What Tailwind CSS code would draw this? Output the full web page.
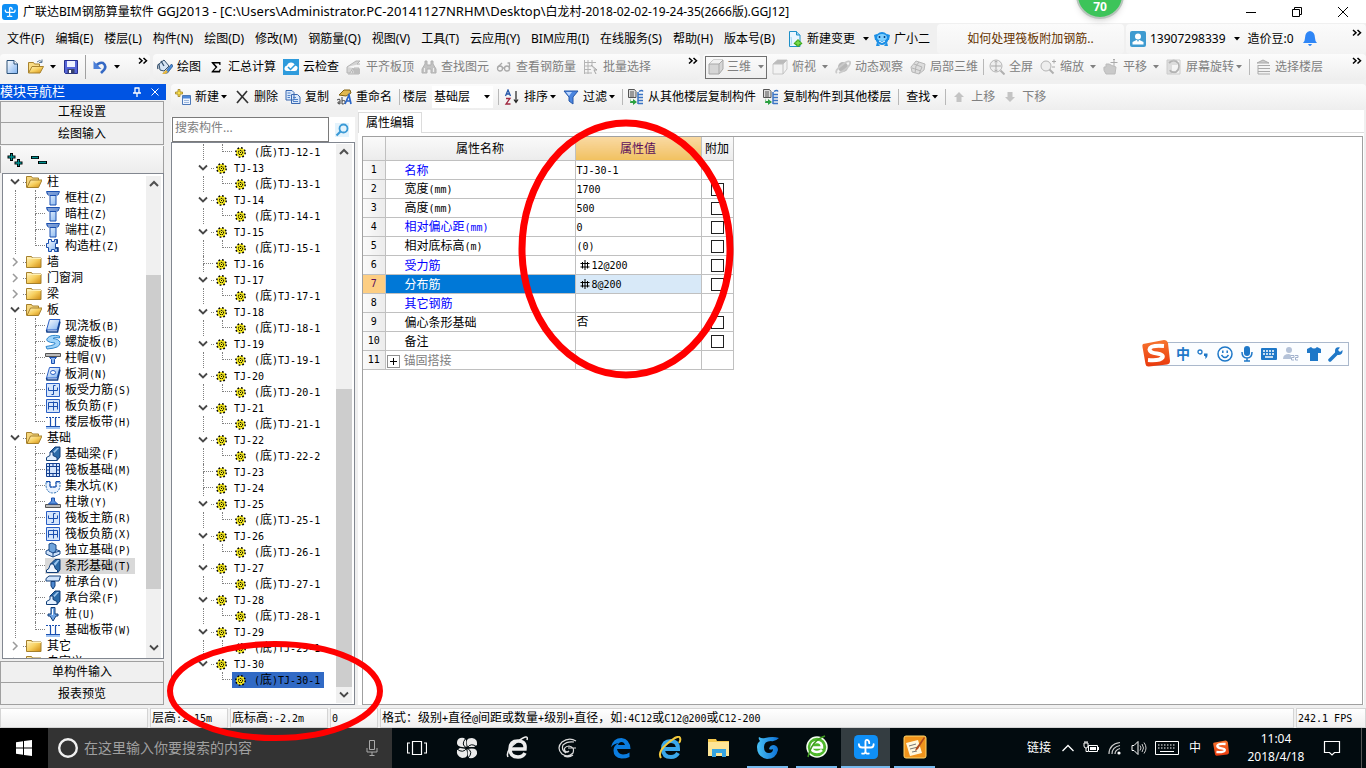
<!DOCTYPE html>
<html lang="zh-CN">
<head>
<meta charset="utf-8">
<title>广联达BIM钢筋算量软件 GGJ2013</title>
<script src="https://cdn.jsdelivr.net/npm/@tailwindcss/browser@4"></script>
</head>
<body class="relative flex h-screen flex-col overflow-hidden bg-[#f0f0f0] font-['Noto_Sans','Noto_Sans_CJK_SC',sans-serif] text-xs text-black">

<svg class="absolute h-0 w-0" aria-hidden="true">
  <defs>
    <linearGradient id="gb" x1="0" y1="0" x2="1" y2="1"><stop offset="0" stop-color="#fff"/><stop offset="1" stop-color="#7fb2f0"/></linearGradient>
    <linearGradient id="gf" x1="0" y1="0" x2="1" y2="1"><stop offset="0" stop-color="#fff3c4"/><stop offset=".5" stop-color="#f7d060"/><stop offset="1" stop-color="#d08a10"/></linearGradient>
    <linearGradient id="go" x1="0" y1="0" x2="0" y2="1"><stop offset="0" stop-color="#f7752f"/><stop offset="1" stop-color="#e9380c"/></linearGradient>
    <linearGradient id="gg" x1="0" y1="0" x2="1" y2="0"><stop offset="0" stop-color="#48c0f4"/><stop offset="1" stop-color="#0b6fd6"/></linearGradient>
  </defs>
  <symbol id="logo" viewBox="0 0 22 22"><rect width="22" height="22" rx="4" fill="#0f8ff5"/><path d="M14 7.500Q14 4.500 11.500 4.500 10.500 4.500 10.500 6v9q0 2.500-3 2M4.500 8.500q0 3 3 3h8q2.500 0 2.500-3M10.500 15q0 2.500 3 2" fill="none" stroke="#fff" stroke-width="1.700" stroke-linecap="round"/></symbol>
  <symbol id="new" viewBox="0 0 16 16"><path d="M3 1.500h7l3.500 3.500v9.500H3z" fill="url(#gb)" stroke="#2a5078"/><path d="M10 1.500V5h3.500" fill="#fff" stroke="#2a5078"/></symbol>
  <symbol id="open" viewBox="0 0 16 16"><path d="M.5 14V3.500h5l1 1.500h5v3" fill="#f9dc85" stroke="#a8822e"/><path d="M.5 14 4 7.500h11.500L12 14z" fill="url(#gf)" stroke="#a8822e"/><path d="M9 3q3-3 5 0m0-2.500V3.500h-3" fill="none" stroke="#5d7b99"/></symbol>
  <symbol id="save" viewBox="0 0 16 16"><path d="M1.500 1.500h13v13h-12l-1-1z" fill="#5565d8" stroke="#27308e"/><path d="M4 2h8v6H4z" fill="#eef2ff"/><path d="M4.500 10h7v4.500h-7z" fill="#39436f"/><path d="M6 11h2v3H6z" fill="#fff"/></symbol>
  <symbol id="undo" viewBox="0 0 16 16"><path d="M4 7q3-4 7-3 4 3 1 7l-3 3" fill="none" stroke="#3569c4" stroke-width="2.600"/><path d="M1.500 2v8h8z" fill="#4c80d8"/></symbol>
  <symbol id="paint" viewBox="0 0 16 16"><path d="m2 5 5-4 5 6-5 5-4-1z" fill="#d8e6f5" stroke="#35516e"/><path d="M2 5q-2 1-1 5M4 2l3 5" fill="none" stroke="#35516e" stroke-width="1.300"/><path d="M14.500 5 9 12l-3 2.500L10.500 14 16 7z" fill="#4a8cd8" stroke="#1f4c88" stroke-width=".7"/><path d="m9 11 2 2-3 2H5z" fill="#e9b83c"/></symbol>
  <symbol id="sigma" viewBox="0 0 16 16"><path d="M3.500 3h9v3h-1l-.7-1.600H6.300L9.500 8l-3.700 3.800h5.200l.8-1.800h1L12 13.500H3.500v-.8L7.500 8.300 3.500 3.800z"/></symbol>
  <symbol id="cloud" viewBox="0 0 16 16"><path d="M0 0h16v16H0z" fill="#2e9bdc"/><path d="M4 12q-3-.5-2.500-3T4 6.500Q5 3.500 8 3.500T12 6.500q3 .5 2.500 3T12 12z" fill="#fff"/><path d="m5 8 2.500 2.500L12 6" fill="none" stroke="#2e9bdc" stroke-width="1.500"/></symbol>
  <symbol id="align" viewBox="0 0 16 16"><path d="m1 8 9-6 4 0-3 3 3 0M1 8v6h3l3-5M6 14l2-5h5v6H2" fill="#d4d4d4" stroke="#b4b4b4"/><path d="M8 10h6v5H8z" fill="#bdbdbd"/></symbol>
  <symbol id="bino" viewBox="0 0 16 16"><path d="M4 2h2v4h4V2h2v3l3 5v4h-5v-4H6v4H1v-4l3-5z" fill="#c3c3c3" stroke="#b0b0b0"/><path d="M3.500 9v4m9-4v4" stroke="#eee"/></symbol>
  <symbol id="glasses" viewBox="0 0 16 16"><g fill="none" stroke="#a9a9a9" stroke-width="1.300"><circle cx="4" cy="9.500" r="2.500"/><circle cx="11" cy="9.500" r="2.500"/><path d="M6.500 9h2M2 8l4-4M13.500 10V4h-2"/></g></symbol>
  <symbol id="batch" viewBox="0 0 16 16"><path d="M1.500 1v14M1.500 3.500H13M1.500 7H9M1.500 10.500H8M1.500 14H9M5 1v14M9 1v6" fill="none" stroke="#b4b4b4"/><path d="m8 6 6 5H11l2 4" fill="#ddd" stroke="#a4a4a4"/></symbol>
  <symbol id="cube" viewBox="0 0 16 16"><path d="M1 5 5.500 1H15v9l-4 5H1z" fill="#d6d6d6" stroke="#a8a8a8"/><path d="M1 5 5.500 1H15l-4 4z" fill="#f2f2f2"/><path d="M1 5h10v10M11 5l4-4" fill="none" stroke="#a8a8a8"/></symbol>
  <symbol id="cube2" viewBox="0 0 16 16"><path d="M1 5 5.500 1H15v9l-4 5H1z" fill="#f2f2f2" stroke="#c8c8c8"/><path d="M1 5 5.500 1H15l-4 4z" fill="#bbb"/><path d="M1 5h10v10M11 5l4-4" fill="none" stroke="#c0c0c0"/></symbol>
  <symbol id="orbit" viewBox="0 0 16 16"><circle cx="8" cy="8" r="5" fill="#b8b8b8"/><path d="M2 14q-3-2 5-8 6-5 8-3 1 2-3 6-3 3-8 5" fill="none" stroke="#cacaca" stroke-width="1.800"/></symbol>
  <symbol id="part" viewBox="0 0 16 16"><path d="m1 8 5-6 9 3-1 6-5 4-7-2z" fill="#ddd" stroke="#b8b8b8"/><path d="m4 5 8 3-3 7M9 3 6 7l-1 7M2 9l9 3" fill="none" stroke="#b4b4b4"/></symbol>
  <symbol id="full" viewBox="0 0 16 16"><circle cx="7" cy="7" r="6" fill="#eee" stroke="#b5b5b5"/><path d="M7 2v10M2 7h10m-6.500-4L7 2l1.500 1M5.500 11 7 12l1.500-1" fill="none" stroke="#aaa"/><path d="m11.500 11.500 4 4" stroke="#b0b0b0" stroke-width="2"/></symbol>
  <symbol id="zoomi" viewBox="0 0 16 16"><circle cx="6" cy="7" r="5" fill="#eee" stroke="#b5b5b5"/><path d="m9.500 10.500 4 4" stroke="#b0b0b0" stroke-width="2"/><path d="M12 2.500h4M14 .5v4M12 8h3" stroke="#aaa"/></symbol>
  <symbol id="pan" viewBox="0 0 16 16"><path d="M3 15q-3-4-2-7h2V5h3l4 2 3 1-1 7z" fill="#c9c9c9" stroke="#bbb"/><path d="M11 0v7M7.500 3.500h7M10 1l1-1 1 1" fill="none" stroke="#aaa"/></symbol>
  <symbol id="rot" viewBox="0 0 16 16"><path d="M1 1h10v5H6v9H1z" fill="#ddd"/><path d="M3 4q5-5 9 0 3 5-2 9-5 1-6-2" fill="none" stroke="#b3b3b3" stroke-width="1.800"/><path d="M1 1h13v14H1z" fill="none" stroke="#ccc"/></symbol>
  <symbol id="floors" viewBox="0 0 16 16"><path d="M2 4 8 1l6 3zM3 6.500h12M3 9.500h12M3 12.500h12M3 15h12M3 6v9" fill="#ccc" stroke="#aaa"/></symbol>
  <symbol id="add" viewBox="0 0 16 16"><path d="M7.500 6.500h8v9h-8z" fill="#eef4ff" stroke="#4c78b8"/><path d="M8 7h7v2.500H8z" fill="#4c86d8"/><path d="M9 11.500h5M9 13.500h5" stroke="#9db8dc"/><path d="M3 .5h2V3h2.500v2H5v2.500H3V5H.5V3H3z" fill="#f8df50" stroke="#a08020" stroke-width=".8"/></symbol>
  <symbol id="del" viewBox="0 0 16 16"><path d="m3 2 11 12M13 2 3 14" stroke="#333" stroke-width="1.700"/></symbol>
  <symbol id="copy" viewBox="0 0 16 16"><path d="M1 1.500h6l2 2V11H1zM6.500 5.500h6l2.500 2.500v6.500H6.500z" fill="#dbe9fb" stroke="#3b69b0"/><path d="M2.500 4h3m-3 2.500h3m-3 2H5M8 8.500h3M8 10.500h5M8 12.500h5" stroke="#4e81c8"/></symbol>
  <symbol id="ren" viewBox="0 0 16 16"><path d="M3 6 8 1h6l1 3-5 3z" fill="#e0b850" stroke="#806010"/><path d="M1 11q3-2 3 0v4m0-2H2q-1 2 2 2M6 8v7q4 0 3-3-1-1-3 0" fill="none" stroke="#444"/><path d="m9 15 4-9 2 9m-4-3h3" fill="none" stroke="#2a66c8" stroke-width="1.700"/></symbol>
  <symbol id="sort" viewBox="0 0 16 16"><path d="M1.500 7 4 1l2.500 6M2.500 5h3" fill="none" stroke="#2456a8" stroke-width="1.300"/><path d="M2 9.500h4L2 15h4.500" fill="none" stroke="#a02840" stroke-width="1.300"/><path d="M12 2v11m-2-2.500 2 3 2-3" fill="none" stroke="#222" stroke-width="1.200"/></symbol>
  <symbol id="filter" viewBox="0 0 16 16"><path d="M1 2h14l-5 6v7l-4-3V8z" fill="#4c86e0" stroke="#2557a8"/><path d="M3 3h6L6 7z" fill="#b9d6ff"/></symbol>
  <symbol id="cpf" viewBox="0 0 16 16"><path d="M.5.500h6l1.500 2v6H.5z" fill="#ddd" stroke="#555"/><path d="M2 3h4M2 5h4M2 7h4" stroke="#555"/><path d="M11 2.500q3-2 4 0M10 5.500h5M10 8.500h5M10 11.500h5M10 14.500h5M10 3v12" fill="none" stroke="#3a74c4" stroke-width="1.500"/><path d="M3 9v3h2v-2l4 3-4 3v-2H2" fill="#2aa040"/></symbol>
  <symbol id="up" viewBox="0 0 16 16"><path d="m8 3 5 5h-2.500v5h-5V8H3z" fill="#c4c4c4"/></symbol>
  <symbol id="down" viewBox="0 0 16 16"><path d="m8 13 5-5h-2.500V3h-5v5H3z" fill="#c4c4c4"/></symbol>
  <symbol id="newchg" viewBox="0 0 16 16"><path d="M2.500.5h7l3.500 3.500v11.500H2.500z" fill="#e8f6ff" stroke="#1e90c8"/><path d="M9.500.5V4H13" fill="#9fd6f5" stroke="#1e90c8"/><path d="M4 6q1 4 0 8" stroke="#9fd6f5" fill="none"/><path d="m11 8 4.500 4.500L11 16l-4.500-3.500z" fill="#3da81c"/><path d="M11 9.500v5M8.500 12h5" stroke="#7fe050" stroke-width="1.400"/></symbol>
  <symbol id="face" viewBox="0 0 16 16"><circle cx="8" cy="7.500" r="6.500" fill="#1b8fe6"/><path d="M0 4l3-1v6H1zM16 4l-3-1v6h2zM3 11l-1 4h4zM13 11l1 4h-4z" fill="#1b8fe6"/><ellipse cx="8" cy="6.500" rx="5" ry="3.500" fill="#7fd0ff"/><path d="M5.500 5v2m5-2v2" stroke="#0a3f80" stroke-width="1.500"/><path d="M5 10q3 3 6 0" fill="none" stroke="#fff"/></symbol>
  <symbol id="avatar" viewBox="0 0 16 16"><rect width="16" height="16" rx="2" fill="#3f9bd0"/><circle cx="8" cy="5.500" r="3" fill="#fff"/><path d="M2.500 13.500V11l4-2h3l4 2v2.500z" fill="#fff"/><path d="m7 9 1 2 1-2" fill="#3f9bd0"/></symbol>
  <symbol id="bell" viewBox="0 0 16 16"><path d="M8 0q5 1 5 7 0 3 2 5H1q2-2 2-5 0-6 5-7zM6 13h4q-2 4-4 0z" fill="#2f86f6"/></symbol>
  <symbol id="dbl" viewBox="0 0 10 8"><path d="m1 1 3 2.800L1 6.500M5.500 1l3 2.800-3 2.700" fill="none" stroke="#000" stroke-width="1.500"/></symbol>
  <symbol id="arr" viewBox="0 0 6 4"><path d="M0 0h6L3 3.500z" fill="currentColor"/></symbol>
  <symbol id="chd" viewBox="0 0 10 8"><path d="m1 1.500 4 4 4-4" fill="none" stroke="#484848" stroke-width="1.800"/></symbol>
  <symbol id="chr" viewBox="0 0 10 10"><path d="m3 1 4 4-4 4" fill="none" stroke="#9a9a9a" stroke-width="1.500"/></symbol>
  <symbol id="chu" viewBox="0 0 10 8"><path d="m1 6 4-4 4 4" fill="none" stroke="#505050" stroke-width="2"/></symbol>
  <symbol id="fold" viewBox="0 0 16 16"><path d="M.5 13.500v-11h5l1 1.500h8.500v9.500z" fill="url(#gf)" stroke="#a5802c"/><path d="M1 4.500h14" stroke="#fff0b0"/></symbol>
  <symbol id="foldo" viewBox="0 0 16 16"><path d="M.5 13.500v-11h5l1 1.500h6V6" fill="#f6d67c" stroke="#a5802c"/><path d="M1 13.500 4.500 6H16l-3.500 7.500z" fill="url(#gf)" stroke="#a5802c"/></symbol>
  <symbol id="gear" viewBox="0 0 11 11"><circle cx="5.500" cy="5.500" r="4.500" fill="#f8ec20"/><circle cx="5.500" cy="5.500" r="4.700" fill="none" stroke="#000" stroke-width="1.500" stroke-dasharray="1.700 1.991"/><circle cx="5.500" cy="5.500" r="2.100" fill="none" stroke="#000" stroke-width="1.100" stroke-dasharray="1 .65"/><path d="M5 5h1v1H5z"/></symbol>
  <symbol id="col" viewBox="0 0 16 16"><path d="M1.500 1.500h13L13 5H3zM5 5.500h6v9.500H5z" fill="url(#gb)" stroke="#1b50b0"/><path d="M1.500 3h12" stroke="#1b50b0"/></symbol>
  <symbol id="gcol" viewBox="0 0 16 16"><path d="M3.500 1.500h3v2h3v-2h3v4h-2v4h2v4h-3v-2h-3v2h-3v-4h-2v-4h2z" fill="url(#gb)" stroke="#1b50b0"/><path d="M12 2v3m-2 5h3v4" fill="none" stroke="#123a80" stroke-width="1.500"/></symbol>
  <symbol id="slab" viewBox="0 0 16 16"><path d="M4.500 1.500H15L12 12H1.500z" fill="url(#gb)" stroke="#2a5fc4"/><path d="m1.500 12 .5 2h10.500L15 3.500" fill="none" stroke="#12408c" stroke-width="1.500"/></symbol>
  <symbol id="spiral" viewBox="0 0 16 16"><path d="M14.500 2Q6 0 2.500 4T10 9q1 2-9 3.500l1 2.500q14-1 13-6.500Q14 5 8 4.500 9 3 14.500 4z" fill="#9fd4fa" stroke="#2f86cc"/></symbol>
  <symbol id="cap" viewBox="0 0 16 16"><path d="M.5 3.500h15v3H.5z" fill="#bbb" stroke="#555"/><path d="M4.500 7.500h7l-2 2v4h-3v-4z" fill="#8fb9f2" stroke="#1b50b0"/></symbol>
  <symbol id="hole" viewBox="0 0 16 16"><path d="M4.500 1.500H15L12 12H1.500z" fill="url(#gb)" stroke="#2a5fc4"/><path d="m1.500 12 .5 2h10.500L15 3.500" fill="none" stroke="#12408c" stroke-width="1.500"/><ellipse cx="8" cy="6.500" rx="2.500" ry="2" fill="#fff" stroke="#2a5fc4"/></symbol>
  <symbol id="bar1" viewBox="0 0 16 16"><path d="M1.500 1.500h13v13h-13z" fill="#d6e6fc" stroke="#2a5fc4"/><path d="M10.500 3.500h-2v9h-2M3.500 5.500v3h9v-3" fill="none" stroke="#1b50b0"/></symbol>
  <symbol id="bar2" viewBox="0 0 16 16"><path d="M1.500 1.500h13v13h-13z" fill="#d6e6fc" stroke="#2a5fc4"/><path d="M8.500 3.500v9M3 8.500h10M3.500 11.500v-7h9v7" fill="none" stroke="#1b50b0"/></symbol>
  <symbol id="strip" viewBox="0 0 16 16"><path d="M1 3.500h14" stroke="#1b50b0" stroke-dasharray="2 1"/><path d="M1 12.500h14M5.500 4v8M10.500 4v8" stroke="#1b50b0" stroke-width="1.200"/><path d="M1 13h14v2H1z" fill="#9fc3f3"/></symbol>
  <symbol id="beam" viewBox="0 0 16 16"><path d="M5 6 10 1h5v10l-3 3.500z" fill="#2b6ba8" stroke="#123f78"/><path d="m8 6 4-4h2L9.500 7z" fill="#9cc6ee"/><path d="M1.500 14.500v-3l3.500-2V6h3v3.500l4 2v3z" fill="#e4f1ff" stroke="#123f78"/></symbol>
  <symbol id="raft" viewBox="0 0 16 16"><path d="M1.500 1.500h13v13h-13zM4.500 4.500h7v7h-7z" fill="#d6e6fc" stroke="#123f90"/><path d="M4.500 1v14M11.500 1v14M1 4.500h14M1 11.500h14M8 1v3M8 12v3M1 8h3M12 8h3" stroke="#123f90"/></symbol>
  <symbol id="pit" viewBox="0 0 16 16"><path d="M1 4h4v5h6V4h4v4q-1 7-7 7T1 8z" fill="#e9f2ff" stroke="#2a6fb4" stroke-dasharray="2 1"/><path d="M1 3.500h4V9h6V3.500h4" fill="none" stroke="#1b50b0"/></symbol>
  <symbol id="pier" viewBox="0 0 16 16"><path d="M.5 10.500h15v3H.5z" fill="#bbb" stroke="#555"/><path d="M3.500 10 6.500 7V4h3v3l3 3z" fill="#5b93dc" stroke="#1b50b0"/></symbol>
  <symbol id="iso" viewBox="0 0 16 16"><path d="m1 9 6-3 8 3v3l-7 3-7-3z" fill="#cfe3fb" stroke="#1b4a88"/><path d="m4 2 3-1 4 2v6l-3 2-4-2z" fill="#6fa4dc" stroke="#1b4a88"/><path d="M8 11v4m0-4 7-2" stroke="#1b4a88"/></symbol>
  <symbol id="stripf" viewBox="0 0 16 16"><path d="M5.500 6 10 1.500h5v10l-2 3z" fill="#2b6ba8" stroke="#123f78"/><path d="m8.500 6 4-4h2L10 8z" fill="#9cc6ee"/><path d="M1.500 14.500V12l2-1 2-5h3l2 5 2 1v2.500z" fill="#eef6ff" stroke="#123f78"/></symbol>
  <symbol id="pcap" viewBox="0 0 16 16"><path d="M1 4.500 4 2h11.500L14 7H1z" fill="#cfe3fb" stroke="#123f78"/><path d="M6 7.500h4V12l-2 3-2-3z" fill="#4d88d0" stroke="#123f78"/></symbol>
  <symbol id="pile" viewBox="0 0 16 16"><path d="M6 1.500h4V8h3v2h-2l-3 5-3-5H3V8h3z" fill="#6fa4e4" stroke="#123f78"/><path d="M7.500 3v6" stroke="#fff"/></symbol>
  <symbol id="sogou" viewBox="0 0 28 28"><path d="M1 5 22 1q3 0 4 3l2 18q0 3-3 3.500L7 27.500Q4 28 3.500 25L.5 8Q0 6 1 5z" fill="url(#go)"/><path d="M22 7Q8 6 7.500 10.500 8 14 15 14.500q7 1 5.500 4Q18 22 6 21" fill="none" stroke="#fff" stroke-width="4"/></symbol>
</svg>

<!-- title bar -->
<header class="flex h-[23px] shrink-0 items-center bg-white pl-0.5">
  <svg class="mr-[5px] size-4"><use href="#logo"/></svg>
  <h1 class="flex-1 whitespace-nowrap">广联达BIM钢筋算量软件 <span class="text-[13px]">GGJ2013 - [C:\Users\Administrator.PC-20141127NRHM\Desktop\</span>白龙村-2018-02-02-19-24-35(2666版).GGJ12]</h1>
  <div class="flex">
    <button aria-label="最小化" class="flex w-[46px] justify-center"><svg class="size-3" viewBox="0 0 12 12"><path d="M1 6.500h10" stroke="#000"/></svg></button>
    <button aria-label="还原" class="flex w-[46px] justify-center"><svg class="size-3" viewBox="0 0 12 12"><path d="M1.500 3.500h7v7h-7zM3.500 3.500v-2h7v7h-2" fill="none" stroke="#000"/></svg></button>
    <button aria-label="关闭" class="flex w-[46px] justify-center"><svg class="size-3" viewBox="0 0 12 12"><path d="m1 1 10 10M11 1 1 11" stroke="#000"/></svg></button>
  </div>
</header>

<!-- menu bar -->
<nav class="flex h-[31px] shrink-0 items-stretch whitespace-nowrap">
  <div class="flex items-center gap-[11px] pl-[7px]">
    <button>文件(F)</button><button>编辑(E)</button><button>楼层(L)</button><button>构件(N)</button><button>绘图(D)</button><button>修改(M)</button><button>钢筋量(Q)</button><button>视图(V)</button><button>工具(T)</button><button>云应用(Y)</button><button>BIM应用(I)</button><button>在线服务(S)</button><button>帮助(H)</button><button>版本号(B)</button>
  </div>
  <div class="ml-auto flex w-[150px] shrink-0 items-center">
    <button class="flex items-center gap-1"><svg class="size-4"><use href="#newchg"/></svg>新建变更<svg class="ml-1 h-1 w-1.5"><use href="#arr"/></svg></button>
    <button class="ml-[5px] flex items-center gap-1"><svg class="size-4"><use href="#face"/></svg>广小二</button>
  </div>
  <div class="mt-px mr-0.5 flex w-[187px] shrink-0 items-center justify-center rounded-sm bg-gradient-to-b from-[#fbfbfb] to-[#f3f3f3]"><a href="#" class="text-[#663300]">如何处理筏板附加钢筋..</a></div>
  <div class="mt-px flex w-[240px] shrink-0 items-center rounded-sm bg-gradient-to-b from-[#fbfbfb] to-[#f3f3f3] pl-1">
    <button class="flex items-center gap-1"><svg class="size-4"><use href="#avatar"/></svg>13907298339<svg class="ml-1 h-1 w-1.5"><use href="#arr"/></svg></button>
    <span class="ml-2">造价豆:0</span>
    <button aria-label="通知" class="ml-2"><svg class="size-4"><use href="#bell"/></svg></button>
    <button aria-label="更多" class="mr-1 mb-3 ml-auto"><svg class="h-2 w-2.5"><use href="#dbl"/></svg></button>
  </div>
</nav>

<!-- main toolbars -->
<div class="flex h-[26px] shrink-0 gap-[3px] whitespace-nowrap">
  <div class="flex w-[150px] shrink-0 items-center rounded-sm bg-gradient-to-b from-[#fcfcfc] to-[#eeeeee] pl-1">
    <button aria-label="新建"><svg class="size-4"><use href="#new"/></svg></button>
    <button aria-label="打开" class="ml-2 flex items-center gap-1.5"><svg class="size-4"><use href="#open"/></svg><svg class="h-1 w-1.5"><use href="#arr"/></svg></button>
    <button aria-label="保存" class="ml-[7px]"><svg class="size-4"><use href="#save"/></svg></button>
    <span class="ml-1.5 h-6 w-px bg-[#a0a0a0]"></span>
    <button aria-label="撤销" class="ml-1.5 flex items-center gap-1.5"><svg class="size-4"><use href="#undo"/></svg><svg class="h-1 w-1.5"><use href="#arr"/></svg></button>
    <button aria-label="更多" class="mr-0.5 mb-3 ml-auto"><svg class="h-2 w-2.5"><use href="#dbl"/></svg></button>
  </div>
  <div class="flex w-[547px] shrink-0 items-center gap-[7px] rounded-sm bg-gradient-to-b from-[#fcfcfc] to-[#eeeeee] pl-1">
    <button class="flex items-center gap-1"><svg class="size-4"><use href="#paint"/></svg>绘图</button>
    <button class="flex items-center gap-1"><svg class="size-4"><use href="#sigma"/></svg>汇总计算</button>
    <button class="flex items-center gap-1"><svg class="size-4"><use href="#cloud"/></svg>云检查</button>
    <button class="flex items-center gap-1 text-[#808080]"><svg class="size-4"><use href="#align"/></svg>平齐板顶</button>
    <button class="flex items-center gap-1 text-[#808080]"><svg class="size-4"><use href="#bino"/></svg>查找图元</button>
    <button class="flex items-center gap-1 text-[#808080]"><svg class="size-4"><use href="#glasses"/></svg>查看钢筋量</button>
    <button class="flex items-center gap-1 text-[#808080]"><svg class="size-4"><use href="#batch"/></svg>批量选择</button>
    <button aria-label="更多" class="mr-0.5 mb-3 ml-auto"><svg class="h-2 w-2.5"><use href="#dbl"/></svg></button>
  </div>
  <div class="flex min-w-0 flex-1 items-center gap-[7px] rounded-sm bg-gradient-to-b from-[#fcfcfc] to-[#eeeeee] pl-0.5 text-[#808080]">
    <button class="-mr-0.5 flex h-[23px] w-[62px] items-center gap-[3px] border border-[#707070] pl-0.5"><svg class="size-4"><use href="#cube"/></svg>三维<svg class="ml-1 h-1 w-1.5"><use href="#arr"/></svg></button>
    <button class="flex items-center gap-1"><svg class="size-4"><use href="#cube2"/></svg>俯视<svg class="ml-0.5 h-1 w-1.5"><use href="#arr"/></svg></button>
    <button class="flex items-center gap-1"><svg class="size-4"><use href="#orbit"/></svg>动态观察</button>
    <button class="flex items-center gap-1"><svg class="size-4"><use href="#part"/></svg>局部三维</button>
    <span class="-mx-0.5 h-4 w-px bg-[#b8b8b8]"></span>
    <button class="flex items-center gap-1"><svg class="size-4"><use href="#full"/></svg>全屏</button>
    <button class="flex items-center gap-1"><svg class="size-4"><use href="#zoomi"/></svg>缩放<svg class="ml-0.5 h-1 w-1.5"><use href="#arr"/></svg></button>
    <button class="flex items-center gap-1"><svg class="size-4"><use href="#pan"/></svg>平移<svg class="ml-0.5 h-1 w-1.5"><use href="#arr"/></svg></button>
    <button class="flex items-center gap-1"><svg class="size-4"><use href="#rot"/></svg>屏幕旋转<svg class="-ml-0.5 h-1 w-1.5"><use href="#arr"/></svg></button>
    <span class="h-4 w-px bg-[#b8b8b8]"></span>
    <button class="-ml-0.5 flex items-center gap-1"><svg class="size-4"><use href="#floors"/></svg>选择楼层</button>
    <button aria-label="更多" class="mr-1 mb-3 ml-auto"><svg class="h-2 w-2.5"><use href="#dbl"/></svg></button>
  </div>
</div>

<div class="mt-1 flex min-h-0 flex-1">
  <!-- module navigation -->
  <aside class="flex w-[166px] shrink-0 flex-col font-['DejaVu_Sans_Mono','Noto_Sans_CJK_SC',monospace]">
    <div class="flex h-4 shrink-0 items-center bg-[#0054e3] text-white">
      <h2 class="flex-1 text-[13px] leading-4">模块导航栏</h2>
      <button aria-label="固定" class="mr-2"><svg class="size-2.5" viewBox="0 0 10 10"><path d="M3 1v4.500M7 1v4.500M2.500 1h5M1 6h8M5 6v4" fill="none" stroke="#fff" stroke-width="1.300"/></svg></button>
      <button aria-label="关闭" class="mr-1.5"><svg class="size-2.5" viewBox="0 0 10 10"><path d="m1.500 1.500 7 7M8.500 1.500l-7 7" stroke="#fff"/></svg></button>
    </div>
    <button class="mt-px mr-0.5 h-[22px] shrink-0 border border-[#a0a0a0] bg-[#f0f0f0]">工程设置</button>
    <button class="mr-0.5 h-[22px] shrink-0 border border-t-0 border-[#a0a0a0] bg-[#f0f0f0]">绘图输入</button>
    <div class="mt-px mr-0.5 flex h-[27px] shrink-0 items-center gap-2 border-x border-[#a0a0a0] bg-gradient-to-b from-[#fafafa] to-[#ececec] pl-1.5">
      <button aria-label="全部展开"><svg class="size-4" viewBox="0 0 16 16"><path d="M4.500 1v8M.5 5h8M11.500 7v8M7.500 11h8" stroke="#000" stroke-width="3"/><path d="M4.500 2v6M1.500 5h6M11.500 8v6M8.500 11h6" stroke="#009090" stroke-width="1.300"/></svg></button>
      <button aria-label="全部折叠"><svg class="size-4" viewBox="0 0 16 16"><path d="M0 5.500h8M7 10.500h9" stroke="#000" stroke-width="3"/><path d="M1 5.500h6M8 10.500h7" stroke="#009090" stroke-width="1.300"/></svg></button>
    </div>
    <div class="mr-0.5 ml-0.5 flex min-h-0 flex-1 border border-[#828790] bg-white">
      <ul id="nav" class="min-w-0 flex-1 overflow-hidden"></ul>
      <div class="mt-0.5 mr-0.5 flex w-[15px] shrink-0 flex-col items-center bg-[#f0f0f0]">
        <svg class="mt-1 h-2 w-2.5 shrink-0"><use href="#chu"/></svg>
        <div class="mt-[87px] h-[314px] w-full bg-[#cdcdcd]"></div>
        <svg class="mt-auto mb-1.5 h-2 w-2.5 shrink-0"><use href="#chd"/></svg>
      </div>
    </div>
    <button class="mt-0.5 mr-0.5 h-[22px] shrink-0 border border-[#a0a0a0] bg-[#f0f0f0]">单构件输入</button>
    <button class="mr-0.5 mb-[3px] h-[22px] shrink-0 border border-t-0 border-[#a0a0a0] bg-[#f0f0f0]">报表预览</button>
  </aside>

  <div class="ml-[5px] flex min-w-0 flex-1 flex-col">
    <!-- component toolbar -->
    <div class="flex h-[26px] shrink-0 items-center gap-[7px] rounded-sm bg-gradient-to-b from-[#fcfcfc] to-[#eeeeee] pl-1 whitespace-nowrap">
      <button class="flex items-center gap-1"><svg class="size-4"><use href="#add"/></svg>新建<svg class="-ml-0.5 h-1 w-1.5"><use href="#arr"/></svg></button>
      <button class="flex items-center gap-1"><svg class="size-4"><use href="#del"/></svg>删除</button>
      <button class="flex items-center gap-1"><svg class="size-4"><use href="#copy"/></svg>复制</button>
      <button class="flex items-center gap-1"><svg class="size-4"><use href="#ren"/></svg>重命名</button>
      <span class="h-4 w-px bg-[#b8b8b8]"></span>
      <label for="floor" class="-ml-1">楼层</label>
      <div class="-ml-0.5 flex h-[22px] w-[61px] items-center bg-white">
        <select id="floor" class="w-[51px] appearance-none bg-white pl-0.5"><option>基础层</option></select><svg class="pointer-events-none ml-px h-1 w-1.5"><use href="#arr"/></svg>
      </div>
      <span class="-ml-0.5 h-4 w-px bg-[#b8b8b8]"></span>
      <button class="-ml-0.5 flex items-center gap-1"><svg class="size-4"><use href="#sort"/></svg>排序<svg class="-ml-0.5 h-1 w-1.5"><use href="#arr"/></svg></button>
      <button class="flex items-center gap-1"><svg class="size-4"><use href="#filter"/></svg>过滤<svg class="-ml-0.5 h-1 w-1.5"><use href="#arr"/></svg></button>
      <span class="h-4 w-px bg-[#b8b8b8]"></span>
      <button class="-ml-0.5 flex items-center gap-1"><svg class="size-4"><use href="#cpf"/></svg>从其他楼层复制构件</button>
      <button class="flex items-center gap-1"><svg class="size-4"><use href="#cpf"/></svg>复制构件到其他楼层</button>
      <span class="h-4 w-px bg-[#b8b8b8]"></span>
      <button class="flex items-center gap-1">查找<svg class="-ml-0.5 h-1 w-1.5"><use href="#arr"/></svg></button>
      <span class="h-4 w-px bg-[#b8b8b8]"></span>
      <button class="-ml-0.5 flex items-center gap-1 text-[#808080]"><svg class="size-4"><use href="#up"/></svg>上移</button>
      <button class="flex items-center gap-1 text-[#808080]"><svg class="size-4"><use href="#down"/></svg>下移</button>
    </div>

    <div class="mb-[3px] flex min-h-0 flex-1">
      <!-- component tree -->
      <section class="flex w-[184px] shrink-0 flex-col font-['DejaVu_Sans_Mono','Noto_Sans_CJK_SC',monospace]">
        <div class="mt-[7px] flex h-[25px] shrink-0 bg-white pl-px">
          <input type="search" aria-label="搜索构件" placeholder="搜索构件..." class="w-[157px] appearance-none border border-[#7a7a7a] bg-white pb-1 pl-0.5 font-['Noto_Sans','Noto_Sans_CJK_SC',sans-serif] placeholder:text-[#808080]">
          <button aria-label="搜索" class="flex flex-1 items-center justify-center"><svg class="size-3.5" viewBox="0 0 14 14"><path d="M0 0h14v14H0z" fill="#e4f3fc"/><circle cx="8.500" cy="5.500" r="4" fill="none" stroke="#3b9ad6" stroke-width="1.800"/><path d="m5.500 8.500-4 4" stroke="#3b9ad6" stroke-width="2.200"/></svg></button>
        </div>
        <div class="flex min-h-0 flex-1 border border-[#828790] bg-white">
          <ul id="tree" class="min-w-0 flex-1 overflow-hidden pt-px"></ul>
          <div class="mt-px mr-0.5 mb-px flex w-4 shrink-0 flex-col items-center bg-[#f0f0f0]">
            <svg class="mt-1 h-2 w-2.5 shrink-0"><use href="#chu"/></svg>
            <div class="mt-auto h-[298px] w-full bg-[#cdcdcd]"></div>
            <svg class="my-1 h-2 w-2.5 shrink-0"><use href="#chd"/></svg>
          </div>
        </div>
      </section>

      <!-- property editor -->
      <main class="mr-0.5 ml-[3px] flex min-w-0 flex-1 flex-col bg-white pt-0.5 font-['DejaVu_Sans_Mono','Noto_Sans_CJK_SC',monospace]">
        <div class="flex h-[21px] shrink-0">
          <button class="w-16 border border-b-0 border-[#dcdcdc]">属性编辑</button>
          <div class="flex-1 border-b border-[#dcdcdc]"></div>
        </div>
        <div class="mt-[3px] mr-px ml-1 min-h-0 flex-1 border border-[#a0a0a0]">
          <table class="w-[370px] table-fixed border-collapse text-left font-normal">
            <colgroup><col class="w-[22px]"><col class="w-[190px]"><col class="w-[126px]"><col class="w-[32px]"></colgroup>
            <thead>
              <tr class="h-[23px] bg-gradient-to-b from-[#fafafa] to-[#ececec] text-center">
                <th class="border border-t-0 border-l-0 border-[#c0c0c0]"></th>
                <th class="border border-t-0 border-[#c0c0c0] pt-0.5 font-normal">属性名称</th>
                <th class="border border-t-0 border-[#c0c0c0] bg-gradient-to-b from-[#f9d9a2] to-[#f1c15f] pt-0.5 font-normal text-[#5b0f5b]">属性值</th>
                <th class="border border-t-0 border-[#c0c0c0] pt-0.5 font-normal whitespace-nowrap">附加</th>
              </tr>
            </thead>
            <tbody id="props"></tbody>
          </table>
        </div>
      </main>
    </div>
  </div>
</div>

<!-- status bar -->
<footer class="flex h-5 shrink-0 gap-0.5 font-['DejaVu_Sans_Mono','Noto_Sans_CJK_SC',monospace] leading-[18px] whitespace-nowrap">
  <div class="w-[148px] border border-[#d4d4d4] bg-gradient-to-b from-white to-[#f0f0f0]"></div>
  <div data-mix class="w-[78px] border border-[#d4d4d4] bg-gradient-to-b from-white to-[#f0f0f0] pl-px">层高:2.15m</div>
  <div data-mix class="w-[98px] border border-[#d4d4d4] bg-gradient-to-b from-white to-[#f0f0f0] pl-px">底标高:-2.2m</div>
  <div data-mix class="w-12 border border-[#d4d4d4] bg-gradient-to-b from-white to-[#f0f0f0] pl-px">0</div>
  <div data-mix class="flex-1 border border-[#d4d4d4] bg-gradient-to-b from-white to-[#f0f0f0] pl-px">格式：级别+直径@间距或数量+级别+直径，如:4C12或C12@200或C12-200</div>
  <div data-mix class="w-[70px] border border-[#d4d4d4] bg-gradient-to-b from-white to-[#f0f0f0] pl-px">242.1 FPS</div>
</footer>

<!-- taskbar -->
<div class="flex h-10 shrink-0 items-stretch bg-[#020b0f] text-white">
  <button aria-label="开始" class="flex w-12 items-center justify-center bg-black"><svg class="size-4" viewBox="0 0 16 16"><path d="M0 2.300 7 1.200v6.300H0zM8 1l8-1v7.500H8zM0 8.500h7v6.300L0 13.700zM8 8.500h8V16l-8-1.100z" fill="#fff"/></svg></button>
  <div class="flex w-[344px] items-center bg-[#333333] pl-2.5">
    <svg class="size-5" viewBox="0 0 20 20"><circle cx="10" cy="10" r="8.800" fill="none" stroke="#f0f0f0" stroke-width="2.400"/></svg>
    <input type="text" aria-label="搜索" placeholder="在这里输入你要搜索的内容" class="ml-1.5 flex-1 bg-transparent text-sm placeholder:text-[#a0a0a0]">
    <button aria-label="语音" class="mr-3"><svg class="size-4" viewBox="0 0 16 16"><path d="M5.500.5h5v9h-5zM3 8v4h10V8M8 12v3.500M5.500 15.500h5" fill="none" stroke="#aaa"/></svg></button>
  </div>
  <button aria-label="任务视图" class="flex w-[50px] items-center justify-center"><svg class="h-4 w-5" viewBox="0 0 20 16"><path d="M5.500 1.500h9v13h-9zM3 3H.5v10H3M17 3h2.500v10H17" fill="none" stroke="#fff" stroke-width="1.200"/></svg></button>
  <button aria-label="风扇" class="flex w-[50px] items-center justify-center"><svg class="size-6" viewBox="0 0 24 24"><g fill="#ebebeb"><path d="M11.500 11Q1 12 2 6q1-5 7-4l2 2z"/><path d="M13 11Q9 2 17 2q6 1 5 7l-3 2z"/><path d="M12.500 13Q23 11 22 18q-2 5-8 4l-1-2z"/><path d="M11 13Q15 22 7 22q-6-2-5-8l3-2z"/></g><path d="M12 12Q5 9 11 2M12 12Q16 6 22 11M12 12q7 4 1 10M12 12q-4 6-10 1" fill="none" stroke="#020b0f"/></svg></button>
  <button aria-label="浏览器" class="flex w-[50px] items-center justify-center"><svg class="size-6" viewBox="0 0 24 24"><path d="M6 13h14q1-8-7-8-8 0-8 8t8 8q5 0 7-4" fill="none" stroke="#eee" stroke-width="3.500"/><path d="M3 21Q0 15 12 6T22 4" fill="none" stroke="#eee" stroke-width="1.500"/></svg></button>
  <button aria-label="广联达G" class="flex w-[50px] items-center justify-center"><svg class="size-5" viewBox="0 0 20 20"><path d="M19 3Q12-1 5 4-1 10 5 16q6 4 11-1 2-6-4-7-6 1-4 5 2 2 4 0M17 4q-7-1-11 3-2 5 3 8M11 10h8M16 17q-4 3-9 1" fill="none" stroke="#ddd" stroke-width="1.200"/></svg></button>
  <button aria-label="Edge" class="ml-1 flex w-[49px] items-center justify-center"><svg class="size-[22px]" viewBox="0 0 22 22"><path d="M1 10Q3 1 11.500 1 20 2 20.500 12H7q1 5 6 5.500 4 0 6.500-2V20q-3 1.500-8 1.500-8-1-8-8Q3.500 8 9 6q-5 .5-8 4zm7-2h7q-1-3-3.500-3T8 8z" fill="#0b7de0"/></svg></button>
  <button aria-label="Internet Explorer" class="flex w-[49px] items-center justify-center"><svg class="size-6" viewBox="0 0 24 24"><path d="M6 13h14q0-8-7-8-8 0-8 8t8 8q5 0 7-4" fill="none" stroke="#3aa7ea" stroke-width="4"/><path d="M3 22Q-1 16 10 7T22 2q1 2-1 5" fill="none" stroke="#f3c93c" stroke-width="2"/></svg></button>
  <button aria-label="文件资源管理器" class="flex w-[49px] items-center justify-center"><svg class="h-5 w-[22px]" viewBox="0 0 22 20"><path d="M0 1h8l1 2h12v15H0z" fill="#f5c84c"/><path d="M0 4h21v14H0z" fill="#fde596"/><path d="M4 19v-8h14v8h-4v-4H8v4z" fill="#36a4e0"/></svg></button>
  <button aria-label="广联达" class="mx-1 flex w-[41px] items-center justify-center border-b-2 border-[#76b9ed]"><svg class="size-6" viewBox="0 0 24 24"><path d="M23 3Q19 7 15 6 8 6 8 12q0 6 5 6 4 0 4-4-2 1-4 0 1-4 5-4 4 1 4 5-2 9-11 9Q1 22 1 12 1 8 4 6 2 4 3 2q3 2 6 1 8-2 14 0z" fill="url(#gg)"/></svg></button>
  <button aria-label="360浏览器" class="mx-1 flex w-[41px] items-center justify-center border-b-2 border-[#76b9ed]"><svg class="size-6" viewBox="0 0 24 24"><circle cx="12" cy="12" r="10" fill="#4fb82c" stroke="#f4fff0" stroke-width="1.500"/><path d="M6.500 12.500H17q0-5.500-5-5.500t-5.500 5q0 5 5.500 5 3 0 5-2" fill="none" stroke="#fff" stroke-width="2.500"/><path d="M3 22Q7 5 20 1" fill="none" stroke="#3f9a20" stroke-width="1.500"/></svg></button>
  <button aria-label="钢筋算量" class="flex w-[49px] items-center justify-center border-b-2 border-[#76b9ed] bg-[#343d41]"><svg class="size-6"><use href="#logo"/></svg></button>
  <button aria-label="便笺" class="mx-1 flex w-[41px] items-center justify-center border-b-2 border-[#76b9ed]"><svg class="size-6" viewBox="0 0 24 24"><rect x="1" y="1" width="22" height="22" rx="2" fill="#f0941c" stroke="#ffd66a"/><path d="m3 8 12-3 4 13-12 3z" fill="#fff7dc"/><path d="m6 11 7-2M7 14l8-2M9 17l5-1" stroke="#777"/><path d="m21 2-8 11-1 3 3-2 7-11z" fill="#b04a1c"/></svg></button>
  <div class="ml-auto flex items-center">
    <span>链接</span>
    <button aria-label="显示隐藏的图标" class="ml-2.5"><svg class="h-3 w-3.5" viewBox="0 0 14 12"><path d="m1.500 9 5.500-5.500L12.500 9" fill="none" stroke="#fff" stroke-width="1.300"/></svg></button>
    <svg class="ml-2 size-4" viewBox="0 0 16 16"><path d="M5.500 5.500h9v6h-9zM15.500 7v3M1 3v3q0 2 2 2t2-2V3zM2 3V1M4 3V1M3 8v3.500h2" fill="none" stroke="#fff"/><path d="M7 7h6v3H7z" fill="#fff"/></svg>
    <svg class="ml-2 size-4" viewBox="0 0 16 16"><path d="M2 14Q2 4 13 2.500M5 14q0-7 8-8.500M8 14q0-4 5-5.500" fill="none" stroke="#ccc" stroke-width="1.200"/><circle cx="12" cy="13" r="1.600" fill="#fff"/></svg>
    <svg class="ml-2 size-4" viewBox="0 0 16 16"><path d="M1 5.500h2l4-4v13l-4-4H1z" fill="none" stroke="#fff"/><path d="M9 5.500q2 2.500 0 5M11 4q3 4 0 8M13 2.500q4 5.500 0 11" fill="none" stroke="#ccc"/></svg>
    <svg class="ml-2 h-3.5 w-6" viewBox="0 0 24 14"><path d="M.5.500h23v13H.5z" fill="none" stroke="#fff"/><path d="M3 4h18M3 7h18" stroke="#fff" stroke-dasharray="1.500 1.500"/><path d="M5 10.500h14" stroke="#fff"/></svg>
    <span class="ml-2.5">中</span>
    <svg class="ml-3 size-4"><use href="#sogou"/></svg>
    <div class="ml-4 w-[62px] text-center leading-[18px]"><div>11:04</div><div>2018/4/18</div></div>
    <button aria-label="操作中心" class="ml-4"><svg class="size-[18px]" viewBox="0 0 18 18"><path d="M1.500 2.500h15v11h-5L9 16l-2.500-2.500h-5z" fill="none" stroke="#fff" stroke-width="1.200"/></svg></button>
    <span class="ml-5 h-10 w-px bg-[#555555]"></span>
    <span class="w-1"></span>
  </div>
</div>

<!-- floating input method bar -->
<div class="absolute top-[342px] right-[17px] flex h-6 w-[196px] items-center justify-between border border-[#aab8cc] bg-[#fbfdff] pr-1 pl-[22px] text-[#1f78c8]">
  <svg class="absolute -top-1 -left-3 size-7"><use href="#sogou"/></svg>
  <button aria-label="中文" class="text-sm font-bold">中</button>
  <svg class="size-3.5" viewBox="0 0 14 14"><circle cx="4" cy="5" r="2" fill="none" stroke="#1f78c8" stroke-width="1.300"/><path d="M8 6.500h3.500q.5 4-2.500 5.500 1-2 0-3H8z" fill="#1f78c8"/></svg>
  <svg class="size-4" viewBox="0 0 16 16"><g fill="none" stroke="#1f78c8" stroke-width="1.500"><circle cx="8" cy="8" r="7"/><path d="M4.500 9q3.500 5 7 0M5.800 4.500v2.500M10.200 4.500v2.500"/></g></svg>
  <svg class="size-4" viewBox="0 0 16 16"><rect x="5" y="0" width="6" height="10" rx="3" fill="#1f78c8"/><path d="M3 6q0 6 5 6t5-6M8 12v3M5 15h6" fill="none" stroke="#1f78c8" stroke-width="1.500"/></svg>
  <svg class="size-4" viewBox="0 0 16 16"><rect y="2" width="16" height="12" rx="1" fill="#1f78c8"/><path d="M2 5h12M2 8h12" stroke="#fff" stroke-width="1.500" stroke-dasharray="2 1"/><path d="M4 11h8" stroke="#fff" stroke-width="1.500"/></svg>
  <svg class="size-4" viewBox="0 0 16 16"><circle cx="6" cy="4" r="3" fill="#b4c2d8"/><path d="M0 13q0-5 6-5l2 1v4z" fill="#b4c2d8"/><path d="M8 9.500h3v2H8.500v2.500H11M12 9.500h3v2h-2.500v2.500H15" fill="none" stroke="#a0b0cc"/></svg>
  <svg class="size-4" viewBox="0 0 16 16"><path d="M5 1q3 3 6 0l4 2 0 4h-3v8H4V7H1V3z" fill="#1f78c8"/></svg>
  <svg class="size-4" viewBox="0 0 16 16"><path d="m2 14 7-7" stroke="#1f78c8" stroke-width="3.500" stroke-linecap="round"/><path d="M14.500 4 12 6 10 4l2-2.500Q7 .5 7 5t4 4 3.500-5z" fill="#1f78c8"/></svg>
</div>

<!-- floating speed ball -->
<div class="absolute -top-[29px] left-[1076px] flex size-12 items-end justify-center rounded-full border-2 border-[#b8c4bc] bg-[#3cc45a] pb-0.5 text-xs font-bold text-white shadow-md">70</div>

<!-- red annotation rings -->
<svg class="pointer-events-none absolute inset-0 h-full w-full" fill="none" stroke="#ff0000"><ellipse cx="626" cy="249" rx="104" ry="126" stroke-width="7"/><ellipse cx="275" cy="691" rx="105" ry="47" stroke-width="6"/></svg>

<script>
// Latin runs are set smaller so that two of them take the width of one Chinese character.
const mix = s => s.replace(/[\x20-\x7e]+/g, m => `<span class="text-[10px]">${m}</span>`);
const use = (id, cls) => `<svg class="${cls}"><use href="#${id}"/></svg>`;
const elbow = last => `<span class="flex h-4 w-2.5 flex-col"><span class="h-2 border-b border-l border-dotted border-[#808080]"></span><span class="${last ? 'h-2' : 'h-2 border-l border-dotted border-[#808080]'}"></span></span>`;

const modules = [
  ['柱', [['col','框柱(Z)'],['col','暗柱(Z)'],['col','端柱(Z)'],['gcol','构造柱(Z)']]],
  ['墙'], ['门窗洞'], ['梁'],
  ['板', [['slab','现浇板(B)'],['spiral','螺旋板(B)'],['cap','柱帽(V)'],['hole','板洞(N)'],['bar1','板受力筋(S)'],['bar2','板负筋(F)'],['strip','楼层板带(H)']]],
  ['基础', [['beam','基础梁(F)'],['raft','筏板基础(M)'],['pit','集水坑(K)'],['pier','柱墩(Y)'],['bar1','筏板主筋(R)'],['bar2','筏板负筋(X)'],['iso','独立基础(P)'],['stripf','条形基础(T)'],['pcap','桩承台(V)'],['beam','承台梁(F)'],['pile','桩(U)'],['strip','基础板带(W)']]],
  ['其它'], ['自定义']
];
document.getElementById('nav').innerHTML = modules.map(([name, kids]) =>
  `<li class="flex h-4 items-center pl-[7px] leading-4 whitespace-nowrap">${kids ? use('chd','h-2 w-2.5') : use('chr','size-2.5')}<span class="ml-[3px] w-[3px] border-b border-dotted border-[#808080]"></span>${use(kids ? 'foldo' : 'fold','size-4')}<span class="ml-[5px]">${name}</span></li>` +
  (kids || []).map(([icon, label], i) =>
    `<li class="flex h-4 items-center pl-3 leading-4 whitespace-nowrap"><span class="h-4 w-5 border-l border-dotted border-[#808080]"></span>${elbow(i === kids.length - 1)}<span class="${label === '条形基础(T)' ? 'flex h-4 items-center bg-[#d9d9d9] pr-1' : 'flex h-4 items-center'}">${use(icon,'size-4')}<span class="ml-1">${mix(label)}</span></span></li>`).join('')
).join('');

const kid = (label, last) => `<li class="flex h-4 items-center pl-[31px] leading-4 whitespace-nowrap"><span class="${last ? 'h-4 w-[19px]' : 'h-4 w-[19px] border-l border-dotted border-[#808080]'}"></span>${elbow(true)}<span class="${last ? 'flex h-4 items-center bg-[#316ac5] pr-1 pl-[3px]' : 'flex h-4 items-center pl-[3px]'}">${use('gear','size-[11px]')}<span class="ml-2">${mix(label)}</span></span></li>`;
let rows = kid('(底)TJ-12-1', false);
for (let n = 13; n <= 30; n++) {
  const leaf = n === 16 || n === 23 || n === 24;
  rows += leaf
    ? `<li class="flex h-4 items-center pl-[31px] leading-4">${elbow(false)}<span class="ml-[3px]"></span>${use('gear','size-[11px]')}<span class="ml-[7px]">${mix('TJ-' + n)}</span></li>`
    : `<li class="flex h-4 items-center pl-[26px] leading-4">${use('chd','h-2 w-2.5')}<span class="mr-0.5 ml-[3px] w-[3px] border-b border-dotted border-[#808080]"></span>${use('gear','size-[11px]')}<span class="ml-[7px]">${mix('TJ-' + n)}</span></li>` + kid(`(底)TJ-${n}-${n === 22 ? 2 : 1}`, n === 30);
}
document.getElementById('tree').innerHTML = rows;

const rebar = '<svg class="mr-0.5 ml-[3px] inline size-2.5" viewBox="0 0 10 10"><path d="M5 0v10M.5 3.500h9M.5 7h9M2.500 2v6.500M7.500 2v6.500" fill="none" stroke="#000"/></svg>';
const black = 'pl-[19px]', blue = 'pl-[19px] text-[#0000ff]';
const props = [
  ['名称', 'TJ-30-1', blue, 0], ['宽度(mm)', '1700', black, 1], ['高度(mm)', '500', black, 1], ['相对偏心距(mm)', '0', blue, 1],
  ['相对底标高(m)', '(0)', black, 1], ['受力筋', '12@200', blue, 1, 1], ['分布筋', '8@200', 'pl-[19px] text-white', 1, 1], ['其它钢筋', '', blue, 0],
  ['偏心条形基础', '否', black, 1], ['备注', '', black, 1], ['锚固搭接', '', 'pl-px text-[#808080]', 0]
];
document.getElementById('props').innerHTML = props.map(([n, v, cls, box, bar], i) =>
  `<tr class="h-[19px] leading-[18px]"><th class="${i === 6 ? 'border border-l-0 border-[#c0c0c0] bg-[#fdce83] text-center text-[10px] font-normal text-[#5b0f5b]' : 'border border-l-0 border-[#c0c0c0] bg-gradient-to-r from-[#fafafa] to-[#ececec] text-center text-[10px] font-normal'}">${i + 1}</th>` +
  `<td class="${i === 6 ? 'border border-[#c0c0c0] bg-[#0078d7]' : 'border border-[#c0c0c0]'}"><div class="flex h-[18px] items-center pt-0.5"><span class="${cls}">${i === 10 ? '<button aria-label="展开" class="mr-1 inline-flex size-[13px] items-center justify-center border border-[#909090] align-middle text-black"><svg class="size-[7px]" viewBox="0 0 7 7"><path d="M3.500 0v7M0 3.500h7" stroke="#000"/></svg></button>' : ''}${mix(n)}</span></div></td>` +
  `<td class="${i === 6 ? 'border border-[#c0c0c0] bg-[#d8e9f8] pl-px' : 'border border-[#c0c0c0] pl-px'}"><div class="h-[18px]">${bar ? rebar : ''}${mix(v)}</div></td>` +
  `<td class="border border-[#c0c0c0]"><div class="flex h-[18px] items-center justify-center pt-px">${box ? `<input type="checkbox" aria-label="附加 ${n}" class="size-[13px] appearance-none border border-[#202020] bg-white">` : ''}</div></td></tr>`
).join('');

document.querySelectorAll('[data-mix]').forEach(e => { e.innerHTML = mix(e.textContent); });
</script>
</body>
</html>
